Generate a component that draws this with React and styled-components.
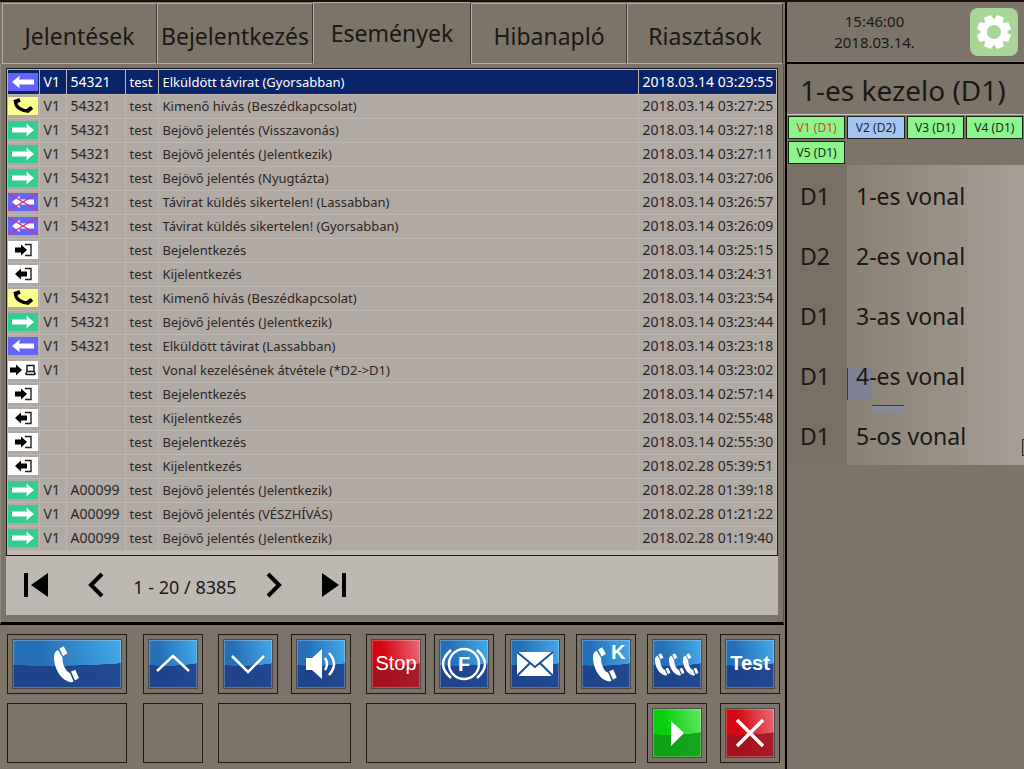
import React, {useState} from 'react';
import styled, {createGlobalStyle, css} from "styled-components";


const GlobalStyle = createGlobalStyle`
  * {
    box-sizing: border-box;
  }

  body {
    margin: 0;
    background: #7c7468;
    color: #1c1815;
    font-family: "Noto Sans", "Open Sans", sans-serif;
  }

  button {
    margin: 0;
    padding: 0;
    font-family: inherit;
    color: inherit;
    cursor: pointer;
  }
`

const tabs = ["Jelentések", "Bejelentkezés", "Események", "Hibanapló", "Riasztások"]

const events = [
    ["sent", "V1", "54321", "Elküldött távirat (Gyorsabban)", "2018.03.14 03:29:55"],
    ["call", "V1", "54321", "Kimenő hívás (Beszédkapcsolat)", "2018.03.14 03:27:25"],
    ["received", "V1", "54321", "Bejövő jelentés (Visszavonás)", "2018.03.14 03:27:18"],
    ["received", "V1", "54321", "Bejövő jelentés (Jelentkezik)", "2018.03.14 03:27:11"],
    ["received", "V1", "54321", "Bejövő jelentés (Nyugtázta)", "2018.03.14 03:27:06"],
    ["failed", "V1", "54321", "Távirat küldés sikertelen! (Lassabban)", "2018.03.14 03:26:57"],
    ["failed", "V1", "54321", "Távirat küldés sikertelen! (Gyorsabban)", "2018.03.14 03:26:09"],
    ["login", "", "", "Bejelentkezés", "2018.03.14 03:25:15"],
    ["logout", "", "", "Kijelentkezés", "2018.03.14 03:24:31"],
    ["call", "V1", "54321", "Kimenő hívás (Beszédkapcsolat)", "2018.03.14 03:23:54"],
    ["received", "V1", "54321", "Bejövő jelentés (Jelentkezik)", "2018.03.14 03:23:44"],
    ["sent", "V1", "54321", "Elküldött távirat (Lassabban)", "2018.03.14 03:23:18"],
    ["takeover", "V1", "", "Vonal kezelésének átvétele (*D2->D1)", "2018.03.14 03:23:02"],
    ["login", "", "", "Bejelentkezés", "2018.03.14 02:57:14"],
    ["logout", "", "", "Kijelentkezés", "2018.03.14 02:55:48"],
    ["login", "", "", "Bejelentkezés", "2018.03.14 02:55:30"],
    ["logout", "", "", "Kijelentkezés", "2018.02.28 05:39:51"],
    ["received", "V1", "A00099", "Bejövő jelentés (Jelentkezik)", "2018.02.28 01:39:18"],
    ["received", "V1", "A00099", "Bejövő jelentés (VÉSZHÍVÁS)", "2018.02.28 01:21:22"],
    ["received", "V1", "A00099", "Bejövő jelentés (Jelentkezik)", "2018.02.28 01:19:40"],
]

const chips = [
    {label: "V1 (D1)", text: "#d2431c"},
    {label: "V2 (D2)", color: "#a3c4f3"},
    {label: "V3 (D1)"},
    {label: "V4 (D1)"},
    {label: "V5 (D1)"},
]

const lines = [
    ["D1", "1-es vonal"],
    ["D2", "2-es vonal"],
    ["D1", "3-as vonal"],
    ["D1", "4-es vonal"],
    ["D1", "5-os vonal"],
]

const eventColors = {
    sent: "#6464f8",
    failed: "#6464f8",
    received: "#33cc93",
    call: "#ffff8c",
    login: "#ffffff",
    logout: "#ffffff",
    takeover: "#ffffff",
}

const EventIcon = ({type}) => (
    <svg width="30" height="18" viewBox="0 0 30 18">
        <rect width="30" height="18" fill={eventColors[type]}/>
        {(type === "sent" || type === "failed") &&
            <path d="M4 9L12 2.500L11 6.500H26V11.500H11L12 15.500Z" fill="#fff"/>}
        {type === "failed" &&
            <path d="M0 0L30 18M30 0L0 18" stroke="#d8307c" strokeWidth="1.3"/>}
        {type === "received" &&
            <path d="M26 9L18 2.500L19 6.500H4V11.500H19L18 15.500Z" fill="#fff"/>}
        {type === "call" &&
            <g fill="none" stroke="#000">
                <path d="M7.500 5.500C8 10 14 14.500 21 14" strokeWidth="3.2"/>
                <path d="M6 5.200L12 2.800M19 14.200L24 10.500" strokeWidth="4"/>
            </g>}
        {type === "login" &&
            <>
                <path d="M7 6.5H13V3.5L19 9L13 14.5V11.5H7Z" fill="#000"/>
                <path d="M17 3.5H23V14.5H17" fill="none" stroke="#222" strokeWidth="1.4"/>
            </>}
        {type === "logout" &&
            <>
                <path d="M19 6.5H13V3.5L7 9L13 14.5V11.5H19Z" fill="#000"/>
                <path d="M17 3.5H23V14.5H17" fill="none" stroke="#222" strokeWidth="1.4"/>
            </>}
        {type === "takeover" &&
            <>
                <path d="M2 6.5H8V3.5L14 9L8 14.5V11.5H2Z" fill="#000"/>
                <path d="M19 4.5H26V10.5H19ZM18 13.5H27M19 10.5L17.5 13.5M26 10.5L27.5 13.5" fill="none" stroke="#111" strokeWidth="1.4"/>
            </>}
    </svg>
)

const Handset = ({x = 0, y = 0, scale = 1}) => (
    <g transform={`translate(${x} ${y}) scale(${scale})`} fill="#fff">
        <path d="M4 4C1 5 0 8 0 11C0 22 6 32 13 35C15 36 18 37 19.500 35.500L16 27C12 26 8 18 8.500 11.500Z"/>
        <path d="M5.400 2.700L9.600 0.300L13.600 7.300L9 10Z"/>
        <path d="M17 25.400L21.300 23.700L25 32L21 34.400Z"/>
    </g>
)

const Gear = () => (
    <svg width="36" height="36" viewBox="-18 -18 36 36">
        <g fill="#fff">
            {[0, 45, 90, 135].map((angle) => (
                <path key={angle} transform={`rotate(${angle + 22.5})`}
                      d="M-5 -11L-3.500 -17H3.500L5 -11V11L3.500 17H-3.500L-5 11Z"/>
            ))}
            <circle r="13"/>
        </g>
        <circle r="7" fill="#a9d596"/>
    </svg>
)

const pictures = {
    phone: <Handset x={9} y={7}/>,
    up: <path d="M9 32L25 17L41 32" fill="none" stroke="#fff" strokeWidth="2.500"/>,
    down: <path d="M9 17L25 33L41 17" fill="none" stroke="#fff" strokeWidth="2.500"/>,
    sound: (
        <g fill="none" stroke="#fff" strokeWidth="2.500">
            <path d="M10 19H16L26 10V40L16 31H10Z" fill="#fff" stroke="none"/>
            <path d="M29 19Q33 25 29 31M33 14Q43 25 33 36"/>
        </g>
    ),
    brake: (
        <g fill="none" stroke="#fff" strokeWidth="2.500">
            <circle cx="25" cy="25" r="15"/>
            <path d="M12 11Q-4 25 12 39M38 11Q54 25 38 39"/>
            <text x="25" y="32" textAnchor="middle" fontFamily="Liberation Sans" fontWeight="700" fontSize="20" fill="#fff" stroke="none">F</text>
        </g>
    ),
    mail: (
        <>
            <path d="M7 13H43V37H7Z" fill="#fff"/>
            <path d="M7 13L25 28L43 13M7 37L20 24M43 37L30 24" fill="none" stroke="#1f5095" strokeWidth="2"/>
        </>
    ),
    phoneK: (
        <>
            <Handset x={12} y={8} scale={0.95}/>
            <text x="30" y="20" fontFamily="Liberation Sans" fontWeight="700" fontSize="20" fill="#fff">K</text>
        </>
    ),
    phones: (
        <>
            <Handset x={3} y={14} scale={0.62}/>
            <Handset x={17} y={14} scale={0.62}/>
            <Handset x={31} y={14} scale={0.62}/>
        </>
    ),
    play: <path d="M19 13L32 25L19 38Z" fill="#fff"/>,
    close: <path d="M12 12L38 38M38 12L12 38" stroke="#fff" strokeWidth="3.500"/>,
}

const keys = [
    {name: "Hívás", picture: "phone", area: "1 / 1"},
    {name: "Fel", picture: "up", area: "1 / 3"},
    {name: "Le", picture: "down", area: "1 / 5"},
    {name: "Hangerő", picture: "sound", area: "1 / 7"},
    {name: "Stop", area: "1 / 9", tone: "red"},
    {name: "Fék", picture: "brake", area: "1 / 11"},
    {name: "Távirat", picture: "mail", area: "1 / 13"},
    {name: "Körhívás", picture: "phoneK", area: "1 / 15"},
    {name: "Csoporthívás", picture: "phones", area: "1 / 17"},
    {name: "Test", area: "1 / 19", bold: true},
    {area: "2 / 1"},
    {area: "2 / 3"},
    {area: "2 / 5 / 3 / 8"},
    {area: "2 / 9 / 3 / 16"},
    {name: "Indítás", picture: "play", area: "2 / 17", tone: "green"},
    {name: "Mégse", picture: "close", area: "2 / 19", tone: "red"},
]

// key widths and the gaps between them
const keypadTracks = [120, 16, 60, 15, 60, 13, 60, 15, 60, 8, 60, 11, 60, 11, 60, 11, 60, 13, 60]

const App = () => {
    const [tab, setTab] = useState("Események")
    const [selected, setSelected] = useState(0)

    return (
        <Page>
            <GlobalStyle/>
            <Main>
                <Tabs>
                    {tabs.map((name) => (
                        <Tab key={name} $active={name === tab} onClick={() => setTab(name)}>{name}</Tab>
                    ))}
                </Tabs>
                <Panel>
                    <Frame>
                        <Table>
                            <colgroup>
                                <Col $width={31}/>
                                <Col $width={27}/>
                                <Col $width={59}/>
                                <Col $width={33}/>
                                <col/>
                                <Col $width={138}/>
                            </colgroup>
                            <tbody>
                            {events.map(([type, line, train, text, date], i) => (
                                <Row key={date} $selected={i === selected} onClick={() => setSelected(i)}>
                                    <IconCell><EventIcon type={type}/></IconCell>
                                    <NumberCell>{line}</NumberCell>
                                    <NumberCell>{train}</NumberCell>
                                    <Cell>test</Cell>
                                    <Cell>{text}</Cell>
                                    <NumberCell>{date}</NumberCell>
                                </Row>
                            ))}
                            </tbody>
                        </Table>
                    </Frame>
                    <Pager>
                        <PagerButton aria-label="Első">
                            <svg width="26" height="26" viewBox="0 0 26 26">
                                <path d="M1 1H5V25H1ZM25 1V25L8 13Z"/>
                            </svg>
                        </PagerButton>
                        <PagerButton aria-label="Előző">
                            <svg width="26" height="26" viewBox="0 0 26 26">
                                <path d="M19 2L8 13L19 24" fill="none" stroke="#000" strokeWidth="4"/>
                            </svg>
                        </PagerButton>
                        <Range>1 - 20 / 8385</Range>
                        <PagerButton aria-label="Következő">
                            <svg width="26" height="26" viewBox="0 0 26 26">
                                <path d="M7 2L18 13L7 24" fill="none" stroke="#000" strokeWidth="4"/>
                            </svg>
                        </PagerButton>
                        <PagerButton aria-label="Utolsó">
                            <svg width="26" height="26" viewBox="0 0 26 26">
                                <path d="M21 1H25V25H21ZM1 1V25L18 13Z"/>
                            </svg>
                        </PagerButton>
                    </Pager>
                </Panel>
                <Keypad>
                    {keys.map((key) => (
                        <Slot key={key.area} $area={key.area}>
                            {key.name &&
                                <Key aria-label={key.name} $tone={key.tone} $bold={key.bold}>
                                    {key.picture
                                        ? <svg width={key.picture === "phone" ? 44 : 50} height="50"
                                               viewBox={key.picture === "phone" ? "0 0 44 50" : "0 0 50 50"}>
                                            {pictures[key.picture]}
                                        </svg>
                                        : key.name}
                                </Key>}
                        </Slot>
                    ))}
                </Keypad>
            </Main>
            <Side>
                <Header>
                    <Clock>
                        <span>15:46:00</span>
                        <span>2018.03.14.</span>
                    </Clock>
                    <Settings aria-label="Beállítások"><Gear/></Settings>
                </Header>
                <Title>1-es kezelo (D1)</Title>
                <Chips>
                    {chips.map((chip) => (
                        <Chip key={chip.label} $color={chip.color} $text={chip.text}>{chip.label}</Chip>
                    ))}
                </Chips>
                <Lines>
                    {lines.map(([desk, name], i) => (
                        <Line key={name}>
                            <Desk>{desk}</Desk>
                            <LineName>
                                {i === 3 && <Focus/>}
                                {i === 4 && <EdgeMark/>}
                                <LineText>{name}</LineText>
                            </LineName>
                        </Line>
                    ))}
                </Lines>
            </Side>
        </Page>
    );
};

const Page = styled.div`
  display: grid;
  grid-template-columns: minmax(0, 1fr) 239px;
  min-height: 100vh;
  border-top: 2px solid #17110d;
`
const Main = styled.main`
  display: flex;
  flex-direction: column;
`
const Tabs = styled.nav`
  display: grid;
  grid-template-columns: 155fr 156fr 158fr 156fr 156fr;
  height: 62px;
  padding: 0 2px;
`
const Tab = styled.button`
  margin-top: 1px;
  background: none;
  border: 1px solid #b5afa6;
  border-right-color: #3d3731;
  font-size: 23px;
  line-height: 32px;
  padding-top: 4px;
  white-space: nowrap;

  ${({$active}) => $active && css`
    margin-top: 0;
    padding-top: 0;
    border-bottom-color: transparent;
  `}
`
const Panel = styled.section`
  padding: 4px 5px 7px;
  border-left: 1px solid #8f887d;
  border-right: 1px solid #57514a;
  border-bottom: 3px solid #000;
  margin-right: 1px;
`
const Frame = styled.div`
  background: #bdb9b2;
  border: 1px solid #1c1815;
  padding: 1px 1px 4px;
`
const Table = styled.table`
  width: 100%;
  table-layout: fixed;
  border-collapse: collapse;
  background: #b1a9a4;
`
const Col = styled.col`
  width: ${({$width}) => $width}px;
`
const Row = styled.tr`
  height: 24px;
  font-size: 13px;
  line-height: 20px;
  color: ${({$selected}) => $selected ? "#fff" : "#2b2623"};
  background: ${({$selected}) => $selected ? "#0a246a" : "none"};
`
const Cell = styled.td`
  padding: 0 0 0 4px;
  border-right: 1px solid #bdb6b0;
  border-bottom: 1px solid #bdb6b0;
  white-space: nowrap;

  &:last-child {
    border-right: none;
  }
`
const NumberCell = styled(Cell)`
  font-size: 14px;
`
const IconCell = styled(Cell)`
  padding: 0;

  svg {
    display: block;
  }
`
const Pager = styled.div`
  display: flex;
  align-items: center;
  height: 59px;
  padding: 0 17px;
  background: #bdb9b2;
`
const PagerButton = styled.button`
  display: flex;
  background: none;
  border: none;

  &:nth-child(2) {
    margin-left: 34px;
  }

  &:last-child {
    margin-left: 34px;
  }
`
const Range = styled.span`
  width: 152px;
  text-align: center;
  font-size: 18px;
  line-height: 24px;
  padding: 4px 0 0 0;
`
const Keypad = styled.div`
  display: grid;
  grid-template-columns: ${keypadTracks.map((size) => `minmax(0, ${size}fr)`).join(" ")};
  grid-template-rows: 60px 60px;
  row-gap: 9px;
  padding: 9px 5px 6px 7px;
`
const Slot = styled.div`
  grid-area: ${({$area}) => $area};
  display: flex;
  padding: 4px;
  border: 1px solid #1f1a12;
`
const tones = {
    blue: ["#2670b8", "#43a9e8", "#1d3c84"],
    red: ["#d4060f", "#ea6a74", "#9c1420"],
    green: ["#07cf0a", "#62e666", "#109a18"],
}
const Key = styled.button`
  flex: 1;
  min-width: 0;
  display: flex;
  align-items: center;
  justify-content: center;
  overflow: hidden;
  color: #fff;
  font-family: "Liberation Sans", sans-serif;
  font-size: 20px;
  font-weight: ${({$bold}) => $bold ? 700 : 400};
  border: 1px solid #8aa9cc;
  outline: 1px solid #4b4a4a;
  outline-offset: -1px;
  box-shadow: inset 0 0 0 1px rgba(255, 255, 255, 0.25);
  ${({$tone = "blue"}) => css`
    background: radial-gradient(ellipse 150% 54% at 35% 0, transparent 99%, ${tones[$tone][2]}dd 100%),
    linear-gradient(80deg, ${tones[$tone][0]} 30%, ${tones[$tone][1]});
  `}

  svg {
    flex: none;
  }
`
const Side = styled.aside`
  border-left: 2px solid #000;
`
const Header = styled.header`
  display: flex;
  align-items: center;
  height: 62px;
  padding-right: 6px;
  border-bottom: 2px solid #000;
`
const Clock = styled.div`
  flex: 1;
  display: flex;
  flex-direction: column;
  align-items: center;
  padding-right: 8px;
  font-size: 15px;
  line-height: 21px;
`
const Settings = styled.button`
  display: flex;
  align-items: center;
  justify-content: center;
  width: 48px;
  height: 48px;
  background: #a9d596;
  border: none;
  border-radius: 8px;
`
const Title = styled.h1`
  margin: 0;
  height: 51px;
  padding-left: 13px;
  border-bottom: 1px solid #c9c4bc;
  font-size: 28px;
  line-height: 52px;
  font-weight: 400;
  white-space: nowrap;
`
const Chips = styled.div`
  display: grid;
  grid-template-columns: repeat(4, 1fr);
  gap: 2px;
  padding: 1px;
`
const Chip = styled.button`
  height: 23px;
  background: ${({$color}) => $color || "#8cf58c"};
  color: ${({$text}) => $text || "#1c2a1c"};
  border: 1px solid #1c2418;
  font-size: 12px;
  line-height: 20px;
`
const Lines = styled.ul`
  list-style: none;
  margin: 0;
  padding: 0;
`
const Line = styled.li`
  display: flex;
  height: 60px;
  font-size: 23px;
  line-height: 62px;
`
const Desk = styled.span`
  width: 60px;
  padding-left: 13px;
  background: #787064;
`
const LineName = styled.span`
  position: relative;
  flex: 1;
  padding-left: 9px;
  background: linear-gradient(90deg, #888073, #a79f96);
  white-space: nowrap;
`
const LineText = styled.span`
  position: relative;
  z-index: 2;
`
/* leftover of the selection frame round the line */
const Focus = styled.span`
  position: absolute;
  z-index: 1;
  left: 0;
  top: 23px;
  width: 25px;
  height: 32px;
  background: #7f8194;
  border-left: 1px solid #2d3560;

  &::after {
    content: "";
    position: absolute;
    left: 24px;
    top: 37px;
    width: 32px;
    height: 7px;
    background: #888a98;
    border-top: 1px solid #2d3a78;
  }
`
const EdgeMark = styled.span`
  position: absolute;
  right: 0;
  top: 34px;
  width: 2px;
  height: 17px;
  background: #8a8894;
  border: 1px solid #2c2a38;
  border-right: none;
`
export default App;
